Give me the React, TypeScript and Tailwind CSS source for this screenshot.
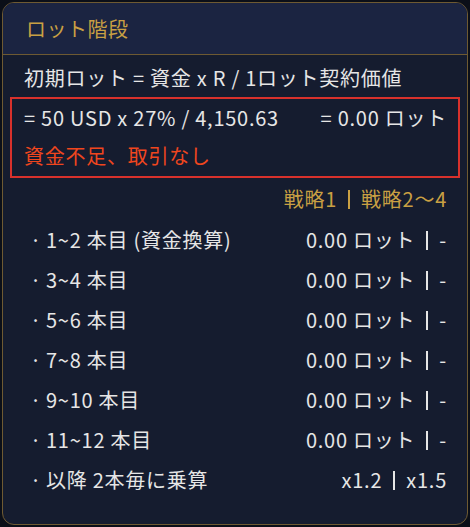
import React from 'react';

const rows = [
  { label: '1~2 本目 (資金換算)', value: '0.00 ロット', tail: '-' },
  { label: '3~4 本目', value: '0.00 ロット', tail: '-' },
  { label: '5~6 本目', value: '0.00 ロット', tail: '-' },
  { label: '7~8 本目', value: '0.00 ロット', tail: '-' },
  { label: '9~10 本目', value: '0.00 ロット', tail: '-' },
  { label: '11~12 本目', value: '0.00 ロット', tail: '-' },
  { label: '以降 2本毎に乗算', value: 'x1.2', tail: 'x1.5' },
];

const Bar = () => <span className="inline-block w-[2px] h-[19px] bg-current mx-[11px]" />;

export default function App() {
  return (
    <div
      className="w-[470px] h-[527px] bg-[#0b0f18] pt-[2px] pl-[2px]"
      style={{ fontFamily: '"Noto Sans CJK JP", "Noto Sans", sans-serif' }}
    >
      <div className="w-[466px] h-[523px] rounded-[12px] border border-[#6e5a32] bg-[#151c2f] overflow-hidden flex flex-col">
        {/* Header */}
        <div className="h-[52px] bg-[#1b2441] border-b border-[#6e5a32] flex items-center pl-[23px]">
          <span className="text-[20px] text-[#c9a043] tracking-[0.5px]">ロット階段</span>
        </div>

        <div className="px-[7px] flex flex-col text-[#e6e6e6] text-[20px] tracking-[0.75px]">
          <div className="h-[42px] pt-[3px] flex items-center pl-[14px]">
            初期ロット = 資金 x R / 1ロット契約価値
          </div>

          <div className="border-2 border-[#d8312c] flex flex-col">
            <div className="h-[38px] flex items-center justify-between pl-[12px] pr-[11px]">
              <span>= 50 USD x 27% / 4,150.63</span>
              <span>= 0.00 ロット</span>
            </div>
            <div className="h-[39px] pb-[1px] flex items-center pl-[12px] text-[#f0461e]">
              資金不足、取引なし
            </div>
          </div>

          <div className="h-[42px] flex items-center justify-end pr-[13px] text-[#c9a043]">
            <span>戦略1</span>
            <Bar />
            <span>戦略2～4</span>
          </div>

          {rows.map((r) => (
            <div key={r.label} className="h-[40px] flex items-center justify-between pl-[20px] pr-[13px]">
              <span>
                <span className="mr-[4px]">·</span>
                {r.label}
              </span>
              <span className="flex items-center">
                <span>{r.value}</span>
                <Bar />
                <span>{r.tail}</span>
              </span>
            </div>
          ))}
        </div>
      </div>
    </div>
  );
}
